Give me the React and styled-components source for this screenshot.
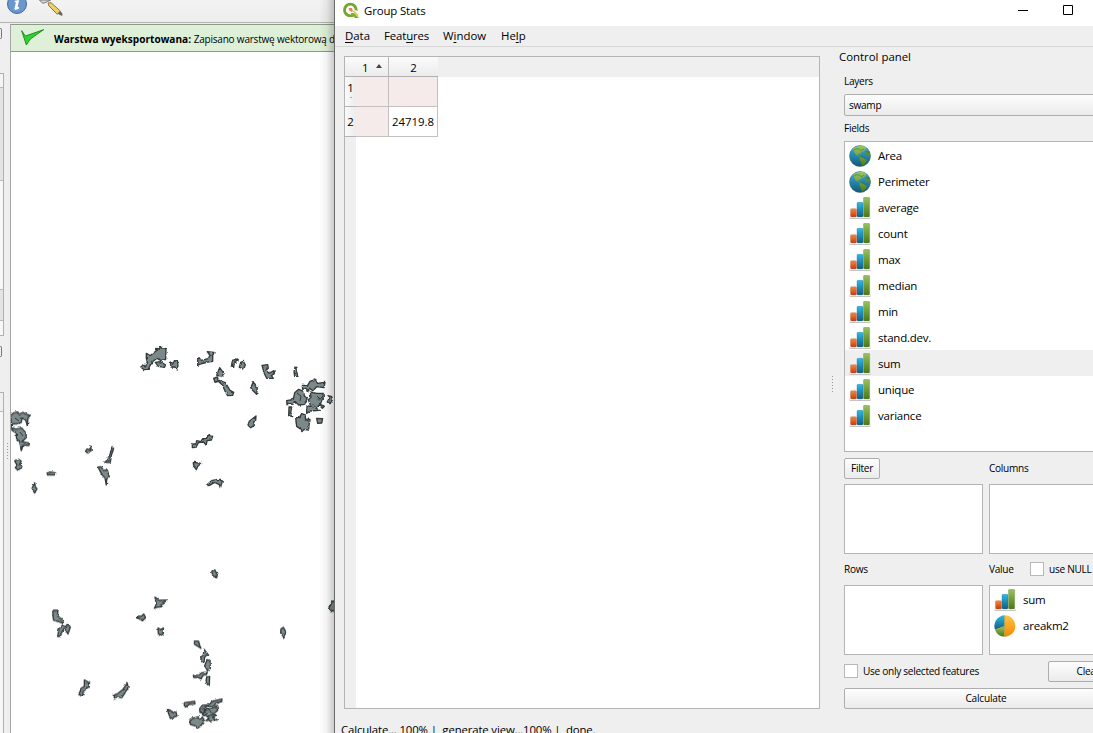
import React from 'react';
import styled, { createGlobalStyle, css } from 'styled-components';

const Global = createGlobalStyle`
  * { box-sizing: border-box; }
  body { margin: 0; overflow: hidden; background: #efefef; }
`;

const Desktop = styled.div`
  display: flex;
  width: 1093px;
  height: 733px;
  overflow: hidden;
  background: #efefef;
  color: #000;
  font: 11.4px/16px 'Open Sans', 'Noto Sans', sans-serif;
`;

/* a line of text, tuned with size and tracking */
const Text = styled.span`
  white-space: pre;
  flex: none;
  font-size: ${(p) => p.$size || 11.4}px;
  letter-spacing: ${(p) => p.$track || 0}px;
  font-weight: ${(p) => (p.$bold ? 700 : 400)};
  u { text-decoration: underline; text-underline-offset: 2px; text-decoration-thickness: 1px; }
`;

/* ---------- main application behind the dialog ---------- */
const MainApp = styled.div`
  position: relative;
  flex: none;
  width: 334px;
  display: flex;
  flex-direction: column;
  overflow: hidden;
`;
const EdgeShadow = styled.div`
  position: absolute;
  inset: 0 0 0 auto;
  width: 15px;
  background: linear-gradient(to right, rgba(0, 0, 0, 0), rgba(0, 0, 0, 0.05) 50%, rgba(0, 0, 0, 0.2));
`;
const Toolbar = styled.div`
  flex: none;
  height: 23px;
  padding-left: 6px;
  display: flex;
  gap: 11px;
  overflow: hidden;
  background: linear-gradient(#f3f3f3, #ededed);
  border-bottom: 1px solid #b2b2b2;
`;
const AppBody = styled.div`
  flex: 1;
  display: flex;
  padding-top: 1px;
`;
const Dock = styled.div`
  flex: none;
  width: 10px;
  display: flex;
  flex-direction: column;
  align-items: flex-start;
`;
const DockTab = styled.div`
  width: 2px;
  height: 11px;
  margin: ${(p) => p.$m};
  border: 1px solid #777;
  border-left: 0;
  border-radius: 0 3px 3px 0;
`;
const DockPanel = styled.div`
  width: 4px;
  height: ${(p) => p.$h}px;
  border: 1px solid #b0b0b0;
  border-left: 0;
  background: #f7f7f7;
  display: flex;
  flex-direction: column;
`;
const DockSection = styled.div`
  height: ${(p) => p.$h}px;
  background: ${(p) => p.$bg};
  border-bottom: 1px solid #b8b8b8;
`;
const DockColumns = styled.div`
  display: flex;
`;
const Canvas = styled.div`
  flex: 1;
  min-width: 0;
  display: flex;
  flex-direction: column;
  border-left: 1px solid #a6a6a6;
  background: #fff;
`;
const Message = styled.div`
  flex: none;
  height: 28px;
  display: flex;
  align-items: center;
  padding: 2px 0 0 10px;
  background: #dff0d8;
  border: solid #8a9a86;
  border-width: 1px 0;
  overflow: hidden;
  svg { margin: -3px 9px 0 0; flex: none; }
`;

/* ---------- Group Stats window ---------- */
const Window = styled.div`
  flex: 1;
  min-width: 0;
  border-left: 1px solid #6a6a6a;
  display: flex;
  flex-direction: column;
  background: #efefef;
`;
const TitleBar = styled.div`
  flex: none;
  height: 26px;
  padding: 0 18px 5px 8px;
  display: flex;
  align-items: center;
  gap: 5px;
  background: #fff;
`;
const TitleButtons = styled.div`
  margin-left: auto;
  display: flex;
`;
const MenuBar = styled.div`
  flex: none;
  height: 21px;
  padding-left: 10px;
  display: flex;
  align-items: center;
  border-bottom: 1px solid #d7d7d7;
`;
const MenuItem = styled.div`
  flex: none;
  width: ${(p) => p.$w}px;
  display: flex;
`;
const Content = styled.div`
  flex: none;
  height: 662px;
  display: flex;
`;
const TableFrame = styled.div`
  flex: none;
  width: 476px;
  margin: 9px 0 0 9px;
  border: 1px solid #b4b4b4;
  background: #fff;
  display: flex;
  flex-direction: column;
`;
const headFill = css`background: linear-gradient(#fbfbfb, #ececec);`;
const HeadRow = styled.div`
  flex: none;
  height: 20px;
  display: flex;
  background: #efefef;
`;
const HeadCell = styled.div`
  flex: none;
  width: ${(p) => p.$w}px;
  padding-top: 2px;
  padding-left: ${(p) => p.$left || 0}px;
  display: flex;
  align-items: center;
  justify-content: ${(p) => (p.$left ? 'flex-start' : 'center')};
  gap: 7px;
  ${headFill}
  border-bottom: 1px solid #b0b0b0;
  border-right: ${(p) => (p.$line ? 1 : 0)}px solid #b9b9b9;
`;
const SortMark = styled.i`
  margin-top: -3px;
  border: 3.5px solid transparent;
  border-top: 0;
  border-bottom: 4px solid #444;
`;
const TableBody = styled.div`
  flex: 1;
  display: flex;
  flex-direction: column;
  background: linear-gradient(to right, #efefef 11px, #fff 11px);
`;
const Row = styled.div`
  height: 30px;
  display: flex;
`;
const RowHead = styled.div`
  flex: none;
  width: 11px;
  display: flex;
  flex-direction: column;
  align-items: center;
  justify-content: center;
  line-height: 13px;
  background: linear-gradient(to right, #fafafa, #ececec);
  border-bottom: 1px solid #b4b4b4;
`;
const Dash = styled.i`
  width: 2px;
  height: 1px;
  margin: 3px 0 4px;
  background: #aaa;
`;
const Cell = styled.div`
  flex: none;
  width: ${(p) => p.$w}px;
  display: flex;
  align-items: center;
  justify-content: flex-end;
  padding-right: 3px;
  background: ${(p) => (p.$plain ? '#fff' : '#f5ebea')};
  border: solid #c4c0c0;
  border-width: 0 1px 1px 0;
`;
const Splitter = styled.div`
  width: ${(p) => p.$w}px;
  flex: none;
  display: flex;
  flex-direction: column;
  align-items: center;
  gap: 2px;
  padding-top: ${(p) => p.$top}px;
  padding-left: ${(p) => p.$left || 0}px;
  i { width: 1px; height: 1px; background: #999; }
`;
const Panel = styled.div`
  flex: none;
  width: 289px;
  padding-top: 1px;
  display: flex;
  flex-direction: column;
`;
const Group = styled.div`
  width: 284px;
  margin-left: 5px;
  display: flex;
  flex-direction: column;
`;
const Label = styled.div`
  flex: none;
  height: ${(p) => p.$h}px;
  padding: ${(p) => p.$pad || 0};
  display: flex;
  align-items: center;
`;
const buttonLook = css`
  border: 1px solid #adadad;
  border-radius: 2px;
  background: linear-gradient(#fdfdfd, #ebebeb);
`;
const Combo = styled.div`
  height: 22px;
  padding-left: 4px;
  display: flex;
  align-items: center;
  ${buttonLook}
`;
const Button = styled.button`
  flex: none;
  width: ${(p) => p.$w}px;
  height: 21px;
  padding: 0 0 1px;
  display: flex;
  align-items: center;
  justify-content: center;
  color: #000;
  font-family: inherit;
  ${buttonLook}
`;
const List = styled.div`
  flex: none;
  width: ${(p) => p.$w}px;
  height: ${(p) => p.$h}px;
  background: #fff;
  border: 1px solid #b4b4b4;
`;
const Item = styled.div`
  height: 26px;
  padding: 1px 0 0 4px;
  display: flex;
  align-items: center;
  gap: 7px;
  background: ${(p) => (p.$on ? '#efefef' : 'transparent')};
  svg { flex: none; }
`;
const Pair = styled.div`
  display: flex;
  align-items: center;
  height: ${(p) => p.$h}px;
  gap: ${(p) => p.$gap || 0}px;
  padding-bottom: ${(p) => p.$low || 0}px;
`;
const Half = styled.div`
  width: ${(p) => p.$w || 139}px;
  flex: none;
  display: flex;
  align-items: center;
`;
const Check = styled.i`
  flex: none;
  width: 14px;
  height: 14px;
  margin-right: 5px;
  background: #fff;
  border: 1px solid #b8b8b8;
`;
const Status = styled.div`
  flex: none;
  padding: 13px 0 0 6px;
`;

const Globe = () => (
  <svg width="22" height="22" viewBox="0 0 66 66">
    <defs>
      <linearGradient id="sea" x1="0" y1="0" x2="0" y2="1"><stop offset="0" stopColor="#37b3dd" /><stop offset="1" stopColor="#12597c" /></linearGradient>
      <linearGradient id="land" x1="0" y1="0" x2="0" y2="1"><stop offset="0" stopColor="#9cc765" /><stop offset="1" stopColor="#4e7a16" /></linearGradient>
    </defs>
    <circle cx="33" cy="33" r="31.5" fill="url(#sea)" stroke="#3b5b5c" strokeWidth="1.5" />
    <path fill="url(#land)" d="M10 13Q22 2 38 2L50 6 53 14 47 12 46 19 38 20 35 27 30 25 27 32 33 33 38 36 52 43 53 47 45 60 40 63 36 52 32 44 32 35 22 30 15 20Z" />
    <path fill="#5e8b2b" d="M51 18 60 17 64 29 64 40 58 33 52 30Z" />
    <path fill="none" stroke="#37622b" strokeWidth="1.5" d="M13 16Q24 9 31 12L37 17 45 12M33 34 44 37 52 43 M52 18 58 22" />
  </svg>
);
const Bars = () => (
  <svg width="22" height="22" viewBox="0 0 66 66">
    <defs>
      <linearGradient id="o" x1="0" y1="0" x2="0" y2="1"><stop offset="0" stopColor="#f58a3c" /><stop offset="1" stopColor="#c83a12" /></linearGradient>
      <linearGradient id="b" x1="0" y1="0" x2="0" y2="1"><stop offset="0" stopColor="#2cbbea" /><stop offset="1" stopColor="#125d80" /></linearGradient>
      <linearGradient id="g" x1="0" y1="0" x2="0" y2="1"><stop offset="0" stopColor="#97c25f" /><stop offset="1" stopColor="#4c7716" /></linearGradient>
    </defs>
    <rect x="1" y="59" width="64" height="7" rx="3" fill="#c4c4c4" />
    <rect x="3" y="58" width="60" height="5" fill="#fff" />
    <rect x="4.500" y="35" width="18" height="25" rx="3" fill="url(#o)" stroke="#b85b35" strokeWidth="1" />
    <rect x="24" y="16" width="18" height="44" rx="3" fill="url(#b)" stroke="#2a6a86" strokeWidth="1" />
    <rect x="43.500" y="1" width="18.500" height="59" rx="3" fill="url(#g)" stroke="#64873e" strokeWidth="1" />
  </svg>
);
const Pie = () => (
  <svg width="22" height="22" viewBox="0 0 66 66">
    <defs><linearGradient id="y" x1="0" y1="0" x2="0" y2="1"><stop offset="0" stopColor="#fdc640" /><stop offset="1" stopColor="#f68508" /></linearGradient></defs>
    <path d="M32 1A32 32 0 0 0 3 44L32 34Z" fill="url(#b)" />
    <path d="M3 44A32 32 0 0 0 32 65V34Z" fill="url(#g)" />
    <path d="M32 1A32 32 0 0 1 32 65Z" fill="url(#y)" />
    <path d="M32 2V64M32 34 4 44" stroke="#b59b39" strokeWidth="2" />
  </svg>
);
const QgisLogo = () => (
  <svg width="16" height="17" viewBox="0 0 48 51">
    <circle cx="22" cy="24" r="17.500" fill="none" stroke="#74a62f" strokeWidth="8.500" />
    <path fill="#fff" d="M26 25 40 25 48 34 48 51 38 48 26 35Z" />
    <path fill="#82b035" d="M23 33H33L48 48H36L27 40Z" />
    <path fill="#d8c84a" d="M27 26 34 26 46 38V45L33 32Z" />
    <path fill="#ee8350" d="M17 18 27 18 30 28 25 29 18 25Z" />
  </svg>
);
const InfoIcon = () => (
  <svg width="22" height="15" viewBox="0 0 66 45">
    <circle cx="33" cy="12" r="28.500" fill="#6a97cc" stroke="#446a9d" strokeWidth="3" />
    <path fill="#fff" d="M27 2 39 0 35 22 40 21 38 27 28 30 25 27 30 7 25 7Z" />
  </svg>
);
const BrushIcon = () => (
  <svg width="25" height="17" viewBox="0 0 75 51">
    <path d="M1 0 12 10 25 5 35 0Z" fill="#dcdcdc" stroke="#747474" strokeWidth="3" />
    <path d="M27 9 36 8 64 33 55 43 30 18Z" fill="#edcf67" stroke="#8f7a3b" strokeWidth="3" />
    <path d="M56 41 64 33 71 42 69 48Z" fill="#666" />
  </svg>
);
const Tick = () => (
  <svg width="24" height="17" viewBox="0 0 72 51">
    <path d="M2 5 13 21 68 2 28 30 16 48Z" fill="#2fd52f" stroke="#187818" strokeWidth="2.500" strokeLinejoin="round" />
  </svg>
);

const northPatches = [
  'M49 55 60 62 78 48 80 40 88 43 91 34 98 43 108 40 107 73 92 76 81 70 70 78 61 90 55 103 42 104 33 97 40 88 46 96 52 83 49 70Z',
  'M76 82 91 80 107 90 103 97 85 94Z', 'M121 81 130 85 133 77 143 80 144 91 142 105 134 96 123 96Z',
  'M203 76 207 68 214 76 234 71 240 62 232 50 252 52 248 64 248 79 233 81 211 87 203 91Z',
  'M269 98 282 116 276 123 260 121Z', 'M251 130 262 126 265 135 286 143 300 166 311 172 308 181 293 182 286 170 278 151 265 139 255 142Z',
  'M307 76 322 72 320 80 313 84 311 97 304 96Z', 'M332 82 340 79 346 90 341 102 328 97Z',
  'M396 91 413 89 415 100 408 106 417 115 432 107 433 116 424 122 430 130 410 130 402 113Z',
  'M495 96 502 99 500 110 504 124 494 124 492 110Z', 'M370 140 375 151 382 158 380 178 368 166 362 158Z',
  'M378 243 377 256 371 261 373 271 362 278 354 270 358 259Z',
  'M517 151 533 151 540 139 557 133 562 145 585 142 582 158 560 155 548 167 541 161 532 170 528 160 518 163Z',
  'M494 173 506 163 521 169 523 183 532 190 524 208 506 210 494 198 490 207 471 209 470 197 490 193Z',
  'M541 171 560 175 579 175 580 188 576 194 571 208 583 214 577 220 568 210 557 219 568 226 540 228 530 235 530 216 541 210 535 194 543 187Z',
  'M477 216 485 216 482 233 488 245 476 242Z', 'M497 248 508 248 515 236 526 240 526 252 540 253 537 271 536 285 522 283 516 290 510 281 500 274Z',
  'M560 250 578 251 575 264 563 265Z', 'M597 182 605 185 607 195 600 206 592 201 596 193Z',
  'M187 327 197 327 200 317 213 320 218 311 229 311 236 300 248 304 244 315 231 317 229 331 221 321 205 323 198 337 187 338Z',
  'M190 382 215 385 203 394 199 404 192 395Z', 'M231 449 246 436 260 434 271 433 277 438 271 459 268 449 254 442 237 452Z',
];
const westPatches = [
  'M32 47 40 39 50 36 58 42 69 37 76 42 91 46 84 53 82 78 77 60 66 54 64 67 50 72 38 71 36 83 47 87 65 84 78 99 79 113 66 125 88 129 87 136 69 136 64 152 59 125 49 115 49 99 36 91Z',
  'M44 183 56 178 64 184 58 193 66 200 54 211 46 203 51 195Z', 'M141 219 153 216 167 219 166 225 143 225Z',
  'M104 248 106 260 111 266 104 279 96 265Z', 'M272 138 274 151 264 159 256 155 261 147 269 149Z',
  'M336 140 341 146 334 166 331 187 314 187 321 181 330 163Z', 'M294 201 303 200 311 211 322 210 328 230 320 237 319 255 315 234 306 224Z',
];
const southPatches = [
  'M38 151 54 151 52 167 66 178 71 190 58 186 40 180Z', 'M68 195 76 201 83 191 91 201 84 222 75 207 68 211 61 229 53 229 57 207Z',
  'M345 111 357 121 382 120 369 129 362 140 350 142 343 145 349 132Z', 'M293 168 304 169 311 162 317 173 308 182 292 173Z',
  'M354 204 362 209 370 204 370 221 361 227 355 220Z', 'M515 34 525 30 532 45 530 53 519 48Z',
  'M464 243 476 244 478 254 483 265 463 252Z', 'M492 268 503 282 494 291 492 306 483 304 483 291 490 285Z',
  'M502 299 510 302 511 326 503 332 494 317Z', 'M460 346 477 345 486 338 502 337 499 344 489 346 483 357 477 353 461 352Z',
  'M500 350 509 350 508 373 502 374 498 364Z', 'M723 207 730 202 738 216 731 232 722 218Z',
  'M877 124 885 122 885 150 876 155 866 146 871 136Z', 'M133 360 149 369 147 380 138 387 129 395 129 404 117 405 123 385 133 379Z',
  'M262 369 264 384 254 400 245 413 233 411 223 417 223 405 234 400 249 388Z', 'M433 428 464 424 465 432 447 433 439 443 433 437Z',
  'M382 449 392 451 398 460 407 453 411 468 391 475 386 461Z',
  'M479 446 487 436 507 434 517 424 546 417 545 425 528 430 518 441 502 438 494 446 493 460 480 457Z',
  'M500 448 512 446 530 437 533 451 522 461 505 458 494 467 487 464Z', 'M450 481 461 474 475 470 480 478 487 471 493 483 481 499 472 505 464 497 451 493Z',
  'M498 467 517 464 528 466 519 472 532 480 518 480 514 486 506 480 498 482 507 474Z',
];
const Patches = ({ items, x, y }) => (
  <g transform={`translate(${x} ${y}) scale(.33333)`}>
    {items.map((d) => <path key={d} d={d} />)}
  </g>
);
const MapView = () => (
  <svg width="323" height="681" viewBox="11 52 323 681" fill="#7b898b" stroke="#343a3b" strokeWidth="4" strokeLinejoin="round">
    <defs>
      <filter id="shore" x="0" y="0" width="1" height="1">
        <feTurbulence type="fractalNoise" baseFrequency="0.35" numOctaves="1" seed="4" />
        <feDisplacementMap in="SourceGraphic" scale="3" xChannelSelector="R" yChannelSelector="G" />
      </filter>
    </defs>
    <g filter="url(#shore)">
      <Patches items={northPatches} x={130} y={335} />
      <Patches items={westPatches} x={0} y={400} />
      <Patches items={southPatches} x={40} y={560} />
    </g>
    <g fill="#fff" strokeWidth="1"><circle cx="313" cy="406" r="1.200" /><circle cx="319" cy="399" r="1" /><circle cx="309" cy="421" r="1" /><circle cx="203" cy="709" r="1" /></g>
    <g fill="none" strokeWidth="1"><path d="M297 393l4 3-1 5M317 396l3 3 3-3M15 418l4 3M20 432l3 4M204 711l4-3 3 4" /></g>
  </svg>
);

const dots = [0, 1, 2, 3, 4, 5];
const fields = ['Area', 'Perimeter', 'average', 'count', 'max', 'median', 'min', 'stand.dev.', 'sum', 'unique', 'variance'];
const Small = (p) => <Text $size={10.1} $track={-0.29} {...p} />;
const Entry = (p) => <Text $size={11.5} $track={-0.22} {...p} />;

export default function App() {
  return (
    <Desktop>
      <Global />
      <MainApp>
        <Toolbar><InfoIcon /><BrushIcon /></Toolbar>
        <AppBody>
          <Dock>
            <DockTab $m="4px 0 34px" />
            <DockPanel $h={263}>
              <DockSection $h={14} $bg="#f5f5f5" />
              <DockSection $h={93} $bg="#e4e4e4" />
              <DockSection $h={109} $bg="#f8f8f8" />
              <DockSection $h={31} $bg="#e4e4e4" />
            </DockPanel>
            <DockTab $m="10px 0 35px" />
            <DockColumns>
              <DockPanel $h={350}><DockSection $h={19} $bg="#efefef" /></DockPanel>
              <Splitter $w={6} $top={51}>{dots.map((n) => <i key={n} />)}</Splitter>
            </DockColumns>
          </Dock>
          <Canvas>
            <Message>
              <Tick />
              <Small $size={10.1} $track={0} $bold>Warstwa wyeksportowana: </Small>
              <Small $size={10} $track={-0.2}>Zapisano warstwę wektorową do</Small>
            </Message>
            <MapView />
          </Canvas>
        </AppBody>
        <EdgeShadow />
      </MainApp>
      <Window>
        <TitleBar>
          <QgisLogo />
          <Text $track={-0.12}>Group Stats</Text>
          <TitleButtons>
            <svg width="58" height="12" viewBox="0 0 58 12" fill="none" stroke="#000"><path d="M1 5.500H11M46.500 .5H55.500V9.500H46.500Z" /></svg>
          </TitleButtons>
        </TitleBar>
        <MenuBar>
          <MenuItem $w={39}><Text><u>D</u>ata</Text></MenuItem>
          <MenuItem $w={59}><Text $track={-0.12}>Feat<u>u</u>res</Text></MenuItem>
          <MenuItem $w={58}><Text>W<u>i</u>ndow</Text></MenuItem>
          <MenuItem $w={40}><Text>He<u>l</u>p</Text></MenuItem>
        </MenuBar>
        <Content>
          <TableFrame>
            <HeadRow>
              <HeadCell $w={11} />
              <HeadCell $w={33} $left={6} $line><Text>1</Text><SortMark /></HeadCell>
              <HeadCell $w={49}><Text>2</Text></HeadCell>
            </HeadRow>
            <TableBody>
              <Row><RowHead><Text>1</Text><Dash /></RowHead><Cell $w={33} /><Cell $w={49} /></Row>
              <Row><RowHead><Text>2</Text></RowHead><Cell $w={33} /><Cell $w={49} $plain><Text>24719.8</Text></Cell></Row>
            </TableBody>
          </TableFrame>
          <Splitter $w={19} $top={329} $left={5}>{dots.map((n) => <i key={n} />)}</Splitter>
          <Panel>
            <Label $h={17}><Text>Control panel</Text></Label>
            <Group>
              <Label $h={29} $pad="3px 0 0"><Small>Layers</Small></Label>
              <Combo><Small>swamp</Small></Combo>
              <Label $h={25} $pad="0 0 2px"><Small>Fields</Small></Label>
              <List $w={284} $h={311}>
                {fields.map((f, i) => (
                  <Item key={f} $on={f === 'sum'}>{i < 2 ? <Globe /> : <Bars />}<Entry>{f}</Entry></Item>
                ))}
              </List>
              <Pair $h={32} $gap={6}>
                <Half><Button $w={36}><Small>Filter</Small></Button></Half>
                <Small>Columns</Small>
              </Pair>
              <Pair $h={70} $gap={6}><List $w={139} $h={70} /><List $w={139} $h={70} /></Pair>
              <Pair $h={31} $low={1}>
                <Half $w={145}><Small>Rows</Small></Half>
                <MenuItem $w={41}><Small>Value</Small></MenuItem>
                <Check /><Small>use NULL</Small>
              </Pair>
              <Pair $h={70} $gap={6}>
                <List $w={139} $h={70} />
                <List $w={139} $h={70}>
                  <Item><Bars /><Entry>sum</Entry></Item>
                  <Item><Pie /><Entry>areakm2</Entry></Item>
                </List>
              </Pair>
              <Pair $h={33} $low={1}>
                <Check /><MenuItem $w={185}><Small>Use only selected features</Small></MenuItem>
                <Button $w={80}><Small>Clear</Small></Button>
              </Pair>
              <Button $w={284}><Small $track={-0.2}>Calculate</Small></Button>
            </Group>
          </Panel>
        </Content>
        <Status><Text $track={-0.15}>Calculate... 100% |  generate view...100% |  done.</Text></Status>
      </Window>
    </Desktop>
  );
}
